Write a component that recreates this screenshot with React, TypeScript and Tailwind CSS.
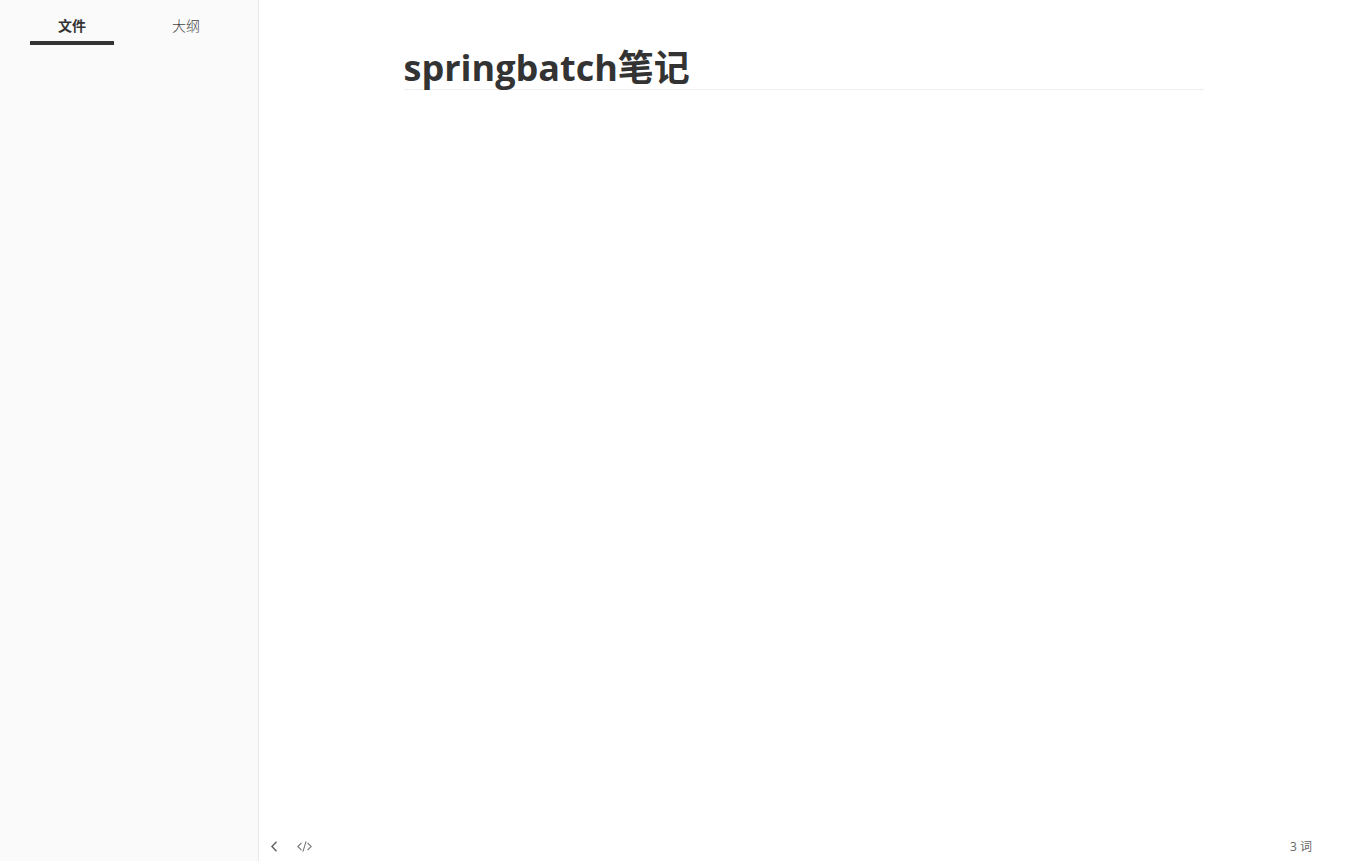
export default function App() {
  return (
    <div className="flex min-h-screen bg-white font-['Open_Sans','Noto_Sans_CJK_SC',sans-serif] text-[#333333]">
      <aside className="w-[259px] shrink-0 border-r border-[#e8e8e8] bg-[#fafafa]">
        <div role="tablist" className="flex gap-[30px] px-[30px] pt-[10px] text-sm">
          <button role="tab" aria-selected="true" className="h-[35px] w-[84px] border-b-4 border-[#333333] font-bold">文件</button>
          <button role="tab" aria-selected="false" className="h-[35px] w-[84px] border-b-4 border-transparent font-light text-[#444444]">大纲</button>
        </div>
      </aside>
      <div className="flex min-w-0 flex-1 flex-col">
        <main className="flex-1 px-[30px] pt-[46px]">
          <h1 className="mx-auto max-w-[800px] border-b border-[#eeeeee] text-4xl leading-[43px] font-bold">springbatch笔记</h1>
        </main>
        <footer className="flex h-7 items-center justify-between pr-9 pl-[7px] text-xs text-[#666666]">
          <div className="flex items-center gap-3">
            <button aria-label="收起侧边栏" className="flex size-4 items-center justify-center">
              <svg width="8" height="12" viewBox="0 0 8 12" fill="none" stroke="#666666" strokeWidth="1.5"><path d="M6.5.8 2 5.5l4.5 4.7" /></svg>
            </button>
            <button aria-label="源代码模式" className="flex h-4 w-5 items-center justify-center">
              <svg width="16" height="12" viewBox="0 0 16 12" fill="none" stroke="#777777" strokeWidth="1.1"><path d="M5.5 1.8 1.8 5.5l3.7 3.7M11.5 1.8l3.7 3.7-3.7 3.7M10.1.4 6.9 10.6" /></svg>
            </button>
          </div>
          <button>3 词</button>
        </footer>
      </div>
    </div>
  );
}
